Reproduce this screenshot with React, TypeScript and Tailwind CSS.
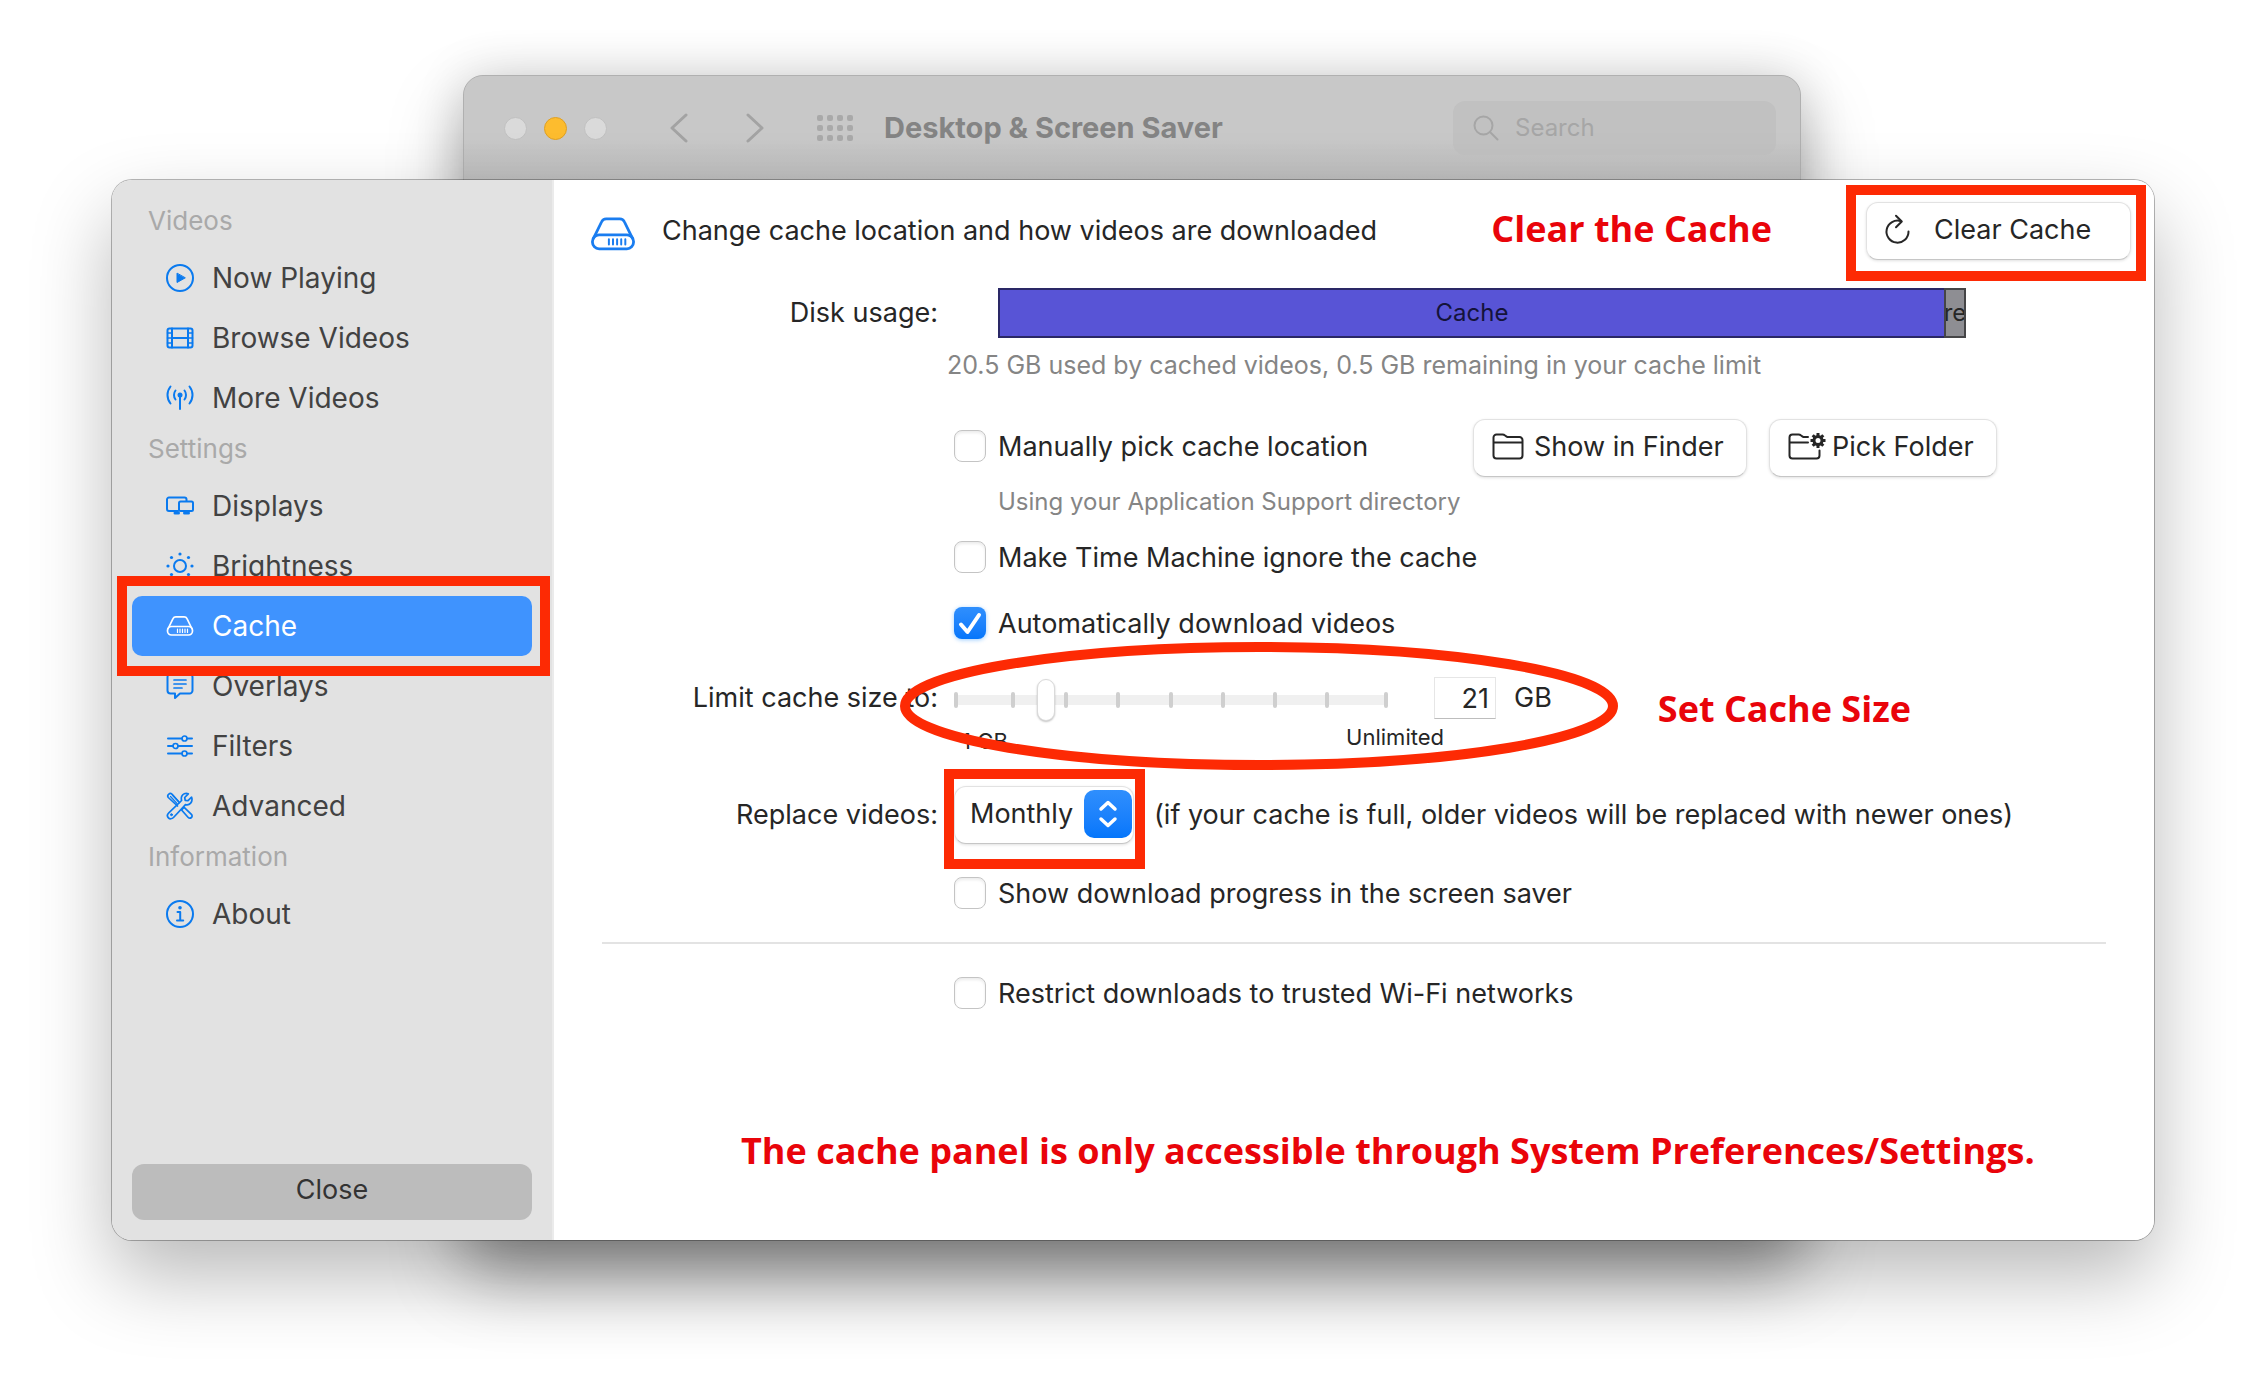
import type { ReactNode } from "react";

function Svg({ size = 28, box = 28, className = "", children }: { size?: number; box?: number; className?: string; children: ReactNode }) {
  return (
    <svg
      width={size}
      height={size}
      viewBox={`0 0 ${box} ${box}`}
      fill="none"
      stroke="currentColor"
      strokeWidth="2"
      strokeLinecap="round"
      strokeLinejoin="round"
      className={`shrink-0 ${className}`}
      aria-hidden="true"
    >
      {children}
    </svg>
  );
}

const PlayIcon = () => (
  <Svg>
    <circle cx="14" cy="14" r="13" />
    <path d="M11 9.500v9l8-4.500z" fill="currentColor" strokeWidth="1" />
  </Svg>
);

const FilmIcon = () => (
  <Svg>
    <rect x="1.500" y="4.500" width="25" height="19" rx="2" />
    <path d="M6 4.500v19M22 4.500v19M6 14h16" />
    <path d="M1.500 9H6M1.500 14H6M1.500 19H6M22 9h4.500M22 14h4.500M22 19h4.500" strokeWidth="1.500" />
  </Svg>
);

const AntennaIcon = () => (
  <Svg>
    <circle cx="14" cy="11" r="2.500" fill="currentColor" stroke="none" />
    <path d="M14 11v14" />
    <path d="M9.500 6.500c-2 2.500-2 6.500 0 9M18.500 6.500c2 2.500 2 6.500 0 9" />
    <path d="M4.500 2.500c-4 5-4 12 0 17M23.500 2.500c4 5 4 12 0 17" />
  </Svg>
);

const DisplaysIcon = () => (
  <Svg>
    <path d="M12 19H3a2 2 0 0 1-2-2V7.500a2 2 0 0 1 2-2h15.500a2 2 0 0 1 2 2V9" />
    <rect x="13" y="9.500" width="14" height="9.500" rx="1.500" />
    <path d="M9 21h3.500M18.500 21h4" strokeWidth="3" />
  </Svg>
);

const SunIcon = () => (
  <Svg>
    <circle cx="14" cy="14" r="6" />
    <g fill="currentColor" stroke="none">
      <circle cx="14" cy="2" r="1.600" />
      <circle cx="14" cy="26" r="1.600" />
      <circle cx="2" cy="14" r="1.600" />
      <circle cx="26" cy="14" r="1.600" />
      <circle cx="5.500" cy="5.500" r="1.600" />
      <circle cx="22.500" cy="5.500" r="1.600" />
      <circle cx="5.500" cy="22.500" r="1.600" />
      <circle cx="22.500" cy="22.500" r="1.600" />
    </g>
  </Svg>
);

const DriveIcon = ({ size = 28 }: { size?: number }) => (
  <Svg size={size}>
    <g strokeWidth="1.700">
      <rect x="1.500" y="14.500" width="25" height="8.500" rx="4" />
      <path d="M2.200 16.500 7 6.700C7.600 5.400 8.400 4.800 9.800 4.800h8.400c1.400 0 2.200.6 2.800 1.900l4.800 9.800" />
      <path d="M11.500 17.200v3.200M14 17.200v3.200M16.500 17.200v3.200M19 17.200v3.200M21.500 17.200v3.200" strokeWidth="1.200" />
    </g>
  </Svg>
);

const BubbleIcon = () => (
  <Svg>
    <path d="M4.500 2h19a3 3 0 0 1 3 3v13.500a3 3 0 0 1-3 3H14l-5 4.500v-4.500H4.500a3 3 0 0 1-3-3V5a3 3 0 0 1 3-3z" />
    <path d="M8 8h12M8 12h12M8 16h8" strokeWidth="1.700" />
  </Svg>
);

const FiltersIcon = () => (
  <Svg>
    <path d="M2 6.500h13.500M21 6.500h5M2 14h5M12 14h14M2 21.500h13.500M21 21.500h5" />
    <g strokeWidth="1.700">
      <circle cx="18.500" cy="6.500" r="2.500" />
      <circle cx="9.500" cy="14" r="2.500" />
      <circle cx="18.500" cy="21.500" r="2.500" />
    </g>
  </Svg>
);

const ToolsIcon = () => (
  <Svg>
    <g strokeWidth="1.700">
      <path d="M11.500 14 2.300 5.500c-.9-1.200-.7-2.300.3-3.200s2.200-1.100 3.300-.2l7.500 8.400" />
      <path d="M4.500 4.500l6.500 7M7 3.500l5.500 6" strokeWidth="1.200" />
      <path d="M15.800 18.200 22 25.200c1 1.100 2.500 1.100 3.400.3s1-2.200 0-3.200l-6.700-6.500c-1.200-.4-2.500.8-2.900 2.400z" />
      <path d="M25.600 5.200 22 8.700l-2.800-.4-.5-2.800 3.600-3.700c-2.900-1-5.600.2-6.600 2.500-.7 1.700-.4 3-.1 4.200L2.800 20.800c-1.600 1.500-1.700 3.600-.4 5s3.600 1.300 5.100-.3l12-12.900c4 1.200 7.700-2.600 6.100-7.400z" />
      <circle cx="5.500" cy="22.700" r="1" fill="currentColor" strokeWidth="1" />
    </g>
  </Svg>
);

const InfoIcon = () => (
  <Svg>
    <circle cx="14" cy="14" r="13" />
    <circle cx="14" cy="7.700" r="1.800" fill="currentColor" stroke="none" />
    <path d="M11.500 12h2.700v8.200M11 20.500h6.200" />
  </Svg>
);

const ReloadIcon = () => (
  <Svg size={32} box={32} className="text-[#262626]">
    <path d="M19 7.200A11 11 0 1 0 26.500 17.500" />
    <path d="M14 1.800l5.800 5.700-5.800 5.700" />
  </Svg>
);

const FolderIcon = () => (
  <Svg size={32} box={32}>
    <path d="M1.500 24.500v-18a3 3 0 0 1 3-3h6c1.200 0 1.800.3 2.600 1l1.200.9c.7.5 1.300.7 2.200.7H27.500a3 3 0 0 1 3 3v15.400a3 3 0 0 1-3 3h-23a3 3 0 0 1-3-3zM1.500 11.500h29" />
  </Svg>
);

const FolderGearIcon = () => (
  <svg width="38" height="32" viewBox="0 0 38 32" fill="none" stroke="currentColor" strokeWidth="2" strokeLinecap="round" strokeLinejoin="round" className="shrink-0" aria-hidden="true">
    <path d="M20 6.100h-3.500c-.9 0-1.500-.2-2.200-.7l-1.200-.9c-.8-.7-1.400-1-2.600-1h-6a3 3 0 0 0-3 3v18a3 3 0 0 0 3 3h24a3 3 0 0 0 3-3V19.500M1.500 11.500H20" />
    <circle cx="30" cy="9.500" r="4" strokeWidth="3" />
    <g strokeWidth="3" strokeLinecap="butt">
      <path d="M30 2v3M30 14v3M22.500 9.500h3M34.500 9.500h3M24.700 4.200l2.200 2.200M33.100 12.600l2.200 2.200M35.300 4.200l-2.200 2.200M26.900 12.600l-2.200 2.200" />
    </g>
  </svg>
);

type Item = { label: string; icon: ReactNode; selected?: boolean };

const sections: { title: string; items: Item[] }[] = [
  {
    title: "Videos",
    items: [
      { label: "Now Playing", icon: <PlayIcon /> },
      { label: "Browse Videos", icon: <FilmIcon /> },
      { label: "More Videos", icon: <AntennaIcon /> },
    ],
  },
  {
    title: "Settings",
    items: [
      { label: "Displays", icon: <DisplaysIcon /> },
      { label: "Brightness", icon: <SunIcon /> },
      { label: "Cache", icon: <DriveIcon />, selected: true },
      { label: "Overlays", icon: <BubbleIcon /> },
      { label: "Filters", icon: <FiltersIcon /> },
      { label: "Advanced", icon: <ToolsIcon /> },
    ],
  },
  { title: "Information", items: [{ label: "About", icon: <InfoIcon /> }] },
];

function SidebarItem({ label, icon, selected }: Item) {
  return (
    <li className="relative">
      <button
        type="button"
        aria-current={selected ? "page" : undefined}
        className={`flex h-[60px] w-full items-center gap-[18px] rounded-[10px] pl-[34px] text-[28px] leading-9 ${
          selected ? "bg-[#3f93fe] text-white" : "text-[#424242]"
        }`}
      >
        <span className={selected ? "text-white" : "text-[#0a7aef]"}>{icon}</span>
        {label}
      </button>
      {selected && <span className="pointer-events-none absolute -inset-y-5 -right-[18px] -left-[15px] z-10 border-10 border-[#fd2a04]" />}
    </li>
  );
}

function Sidebar() {
  return (
    <aside className="flex w-[442px] shrink-0 flex-col rounded-l-[20px] border-r-2 border-[#ebebeb] bg-[#e2e2e2] px-5 py-5">
      <nav>
        {sections.map((s) => (
          <section key={s.title}>
            <h2 className="flex h-12 items-center pb-1.5 pl-4 text-[26px] leading-8 text-[#a9a9a9]">{s.title}</h2>
            <ul>
              {s.items.map((i) => (
                <SidebarItem key={i.label} {...i} />
              ))}
            </ul>
          </section>
        ))}
      </nav>
      <button type="button" className="mt-auto h-14 rounded-xl bg-[#bcbcbc] pb-1 text-[27px] leading-8 text-[#333]">
        Close
      </button>
    </aside>
  );
}

function Check({ id, label, checked = false }: { id: string; label: string; checked?: boolean }) {
  return (
    <div className="flex items-center gap-3">
      <span className="relative flex size-8">
        <input
          id={id}
          type="checkbox"
          defaultChecked={checked}
          className="peer size-8 appearance-none rounded-lg border border-[#c4c4c4] bg-white shadow-[inset_0_2px_3px_rgba(0,0,0,0.08)] checked:border-0 checked:bg-linear-to-b checked:from-[#2f8ffd] checked:to-[#0476fb] checked:shadow-[0_1px_4px_rgba(10,132,255,0.4)]"
        />
        <svg viewBox="0 0 32 32" fill="none" stroke="white" strokeWidth="4" strokeLinecap="round" strokeLinejoin="round" className="pointer-events-none absolute inset-0 hidden size-8 peer-checked:block" aria-hidden="true">
          <path d="M7 17.500l6.500 7.500L25 8" />
        </svg>
      </span>
      <label htmlFor={id} className="pt-0.5">
        {label}
      </label>
    </div>
  );
}

const buttonStyle =
  "flex h-[58px] items-center rounded-xl border border-[#e2e2e2] border-b-[#c6c6c6] bg-white pb-0.5 shadow-[0_1px_3px_rgba(0,0,0,0.12)]";

const row = "grid grid-cols-[384px_1fr] items-center gap-x-4";

function Tick() {
  return <span className="h-4 w-1 rounded-sm bg-[#cfcfcf]" />;
}

function CacheSlider() {
  return (
    <div className="relative mt-1 flex h-[42px] w-[434px] items-center">
      <div className="absolute inset-x-0 h-2.5 rounded-full bg-[#f0f0f0]" />
      <div className="absolute inset-x-0 grid grid-cols-[57fr_53fr_52fr_53fr_52fr_52fr_52fr_59fr_4px]">
        {Array.from({ length: 9 }, (_, i) => (
          <Tick key={i} />
        ))}
      </div>
      <input
        id="limit"
        type="range"
        min={0}
        max={100}
        defaultValue={20}
        className="relative h-[42px] w-full appearance-none bg-transparent [&::-webkit-slider-thumb]:h-[42px] [&::-webkit-slider-thumb]:w-[18px] [&::-webkit-slider-thumb]:appearance-none [&::-webkit-slider-thumb]:rounded-full [&::-webkit-slider-thumb]:border [&::-webkit-slider-thumb]:border-[#dadada] [&::-webkit-slider-thumb]:bg-white [&::-webkit-slider-thumb]:shadow-[0_1px_2px_rgba(0,0,0,0.25)]"
      />
    </div>
  );
}

const note = "font-['Open_Sans',sans-serif] font-bold text-[#e9040a] text-[36px] whitespace-nowrap";

function CachePanel() {
  return (
    <main className="min-w-0 flex-1 rounded-r-[20px] bg-white pb-16 text-[27px] leading-8 text-[#262626]">
      <header className="flex h-[102px] items-center pr-[23px] pl-9">
        <span className="mt-1.5 text-[#1a7df0]">
          <DriveIcon size={46} />
        </span>
        <h1 className="ml-[26px]">Change cache location and how videos are downloaded</h1>
        <p className={`${note} mr-[94px] ml-auto pb-1 leading-10`}>Clear the Cache</p>
        <div className="relative">
          <button type="button" className={`${buttonStyle} w-[265px] gap-5 pl-[15px]`}>
            <ReloadIcon />
            Clear Cache
          </button>
          <span className="pointer-events-none absolute -top-[17px] -right-[15px] -bottom-[21px] -left-5 border-10 border-[#fd2a04]" />
        </div>
      </header>

      <div className={`${row} mt-1.5`}>
        <span className="text-right">Disk usage:</span>
        <div className="mr-[188px] ml-11 flex h-[50px] text-[24px]">
          <div className="flex flex-1 items-center justify-center border-2 border-r-0 border-[#2a2866] bg-[#5854d6]">
            <span className="text-[#14133a]">Cache</span>
          </div>
          <div className="flex w-[22px] items-center justify-center overflow-hidden border-2 border-[#454547] bg-[#8e8e93]">re</div>
        </div>
      </div>
      <p className="flex h-[54px] items-center justify-center text-[25px] text-[#858585]">
        20.5 GB used by cached videos, 0.5 GB remaining in your cache limit
      </p>

      <div className={`${row} mt-[27px]`}>
        <div className="col-start-2 flex items-center">
          <div className="pb-1">
            <Check id="manual" label="Manually pick cache location" />
          </div>
          <div className="mr-[157px] ml-auto flex gap-[22px]">
            <button type="button" className={`${buttonStyle} w-[274px] gap-2.5 pl-[18px]`}>
              <FolderIcon />
              Show in Finder
            </button>
            <button type="button" className={`${buttonStyle} w-[228px] gap-1.5 pl-[18px]`}>
              <FolderGearIcon />
              Pick Folder
            </button>
          </div>
        </div>
      </div>
      <div className={`${row} h-12`}>
        <p className="col-start-2 ml-11 pt-0.5 text-[24px] text-[#858585]">Using your Application Support directory</p>
      </div>
      <div className={`${row} h-16`}>
        <div className="col-start-2">
          <Check id="timemachine" label="Make Time Machine ignore the cache" />
        </div>
      </div>
      <div className={`${row} h-[68px]`}>
        <div className="col-start-2">
          <Check id="auto" label="Automatically download videos" checked />
        </div>
      </div>

      <div className={`${row} mt-[18px]`}>
        <label htmlFor="limit" className="text-right">
          Limit cache size to:
        </label>
        <div className="relative flex h-[46px] items-center">
          <CacheSlider />
          <input
            aria-label="Cache size in GB"
            defaultValue="21"
            className="ml-[46px] h-[42px] w-[62px] border border-[#e6e6e6] border-b-[#bdbdbd] bg-white pr-1.5 text-right"
          />
          <span className="ml-[18px]">GB</span>
          <svg viewBox="0 0 718 128" className="pointer-events-none absolute -top-[33px] -left-[54px] z-10 h-32 w-[718px]" fill="none" aria-hidden="true">
            <ellipse cx="359" cy="64" rx="354" ry="59" stroke="#fd2a04" strokeWidth="10" />
          </svg>
          <p className={`${note} ml-[106px] self-end leading-6`}>Set Cache Size</p>
        </div>
        <div className="col-start-2 flex h-8 w-[490px] justify-between pl-2 text-[22px]">
          <span className="pt-1">1 GB</span>
          <span>Unlimited</span>
        </div>
      </div>

      <div className={`${row} mt-[33px]`}>
        <label htmlFor="replace" className="text-right">
          Replace videos:
        </label>
        <div className="flex items-center gap-5">
          <div className="relative">
            <select
              id="replace"
              defaultValue="Monthly"
              className="block h-[58px] w-[180px] appearance-none rounded-xl border border-[#e2e2e2] border-b-[#c6c6c6] bg-white pb-0.5 pl-[15px] shadow-[0_1px_3px_rgba(0,0,0,0.12)]"
            >
              <option>Monthly</option>
            </select>
            <svg viewBox="0 0 48 48" className="pointer-events-none absolute top-1 right-0.5 size-12 rounded-[10px] bg-linear-to-b from-[#2f8ffd] to-[#0476fb]" fill="none" stroke="white" strokeWidth="3.500" strokeLinecap="round" strokeLinejoin="round" aria-hidden="true">
              <path d="M17 19l7-6.500 7 6.500M17 29l7 6.500 7-6.500" />
            </svg>
            <span className="pointer-events-none absolute -top-[17px] -right-[11px] -bottom-[25px] -left-2.5 border-10 border-[#fd2a04]" />
          </div>
          <span>(if your cache is full, older videos will be replaced with newer ones)</span>
        </div>
      </div>
      <div className={`${row} mt-5 h-[58px]`}>
        <div className="col-start-2">
          <Check id="progress" label="Show download progress in the screen saver" />
        </div>
      </div>
      <hr className="mt-5 mr-12 ml-12 border-t-2 border-[#e3e3e3]" />
      <div className={`${row} mt-5 h-[58px]`}>
        <div className="col-start-2">
          <Check id="wifi" label="Restrict downloads to trusted Wi-Fi networks" />
        </div>
      </div>
      <p className={`${note} mt-[104px] ml-[187px] leading-[50px]`}>
        The cache panel is only accessible through System Preferences/Settings.
      </p>
    </main>
  );
}

function PreferencesWindow() {
  return (
    <div className="absolute -top-[105px] right-[353px] bottom-0 left-[351px] rounded-[20px] border border-[#b0b0b0] bg-[#c7c7c7] shadow-[0_36px_70px_rgba(0,0,0,0.34),0_0_50px_rgba(0,0,0,0.14)]">
      <div className="flex h-[104px] items-center rounded-t-[20px] bg-linear-to-b from-[#c8c8c8] from-60% to-[#bdbdbd] pr-6 pl-10">
        <div className="flex gap-[17px]">
          <span className="size-[23px] rounded-full border border-[#c0c0c0] bg-[#dadada]" />
          <span className="size-[23px] rounded-full border border-[#dfa023] bg-[#fdbc2e]" />
          <span className="size-[23px] rounded-full border border-[#c0c0c0] bg-[#dadada]" />
        </div>
        <button type="button" aria-label="Back" className="ml-[63px] text-[#a3a3a3]">
          <svg width="18" height="30" viewBox="0 0 18 30" fill="none" stroke="currentColor" strokeWidth="3" strokeLinecap="round" strokeLinejoin="round"><path d="M16 2L2 15l14 13" /></svg>
        </button>
        <button type="button" aria-label="Forward" className="ml-[58px] text-[#a3a3a3]">
          <svg width="18" height="30" viewBox="0 0 18 30" fill="none" stroke="currentColor" strokeWidth="3" strokeLinecap="round" strokeLinejoin="round"><path d="M2 2l14 13L2 28" /></svg>
        </button>
        <button type="button" aria-label="Show all" className="ml-[53px] grid grid-cols-4 gap-x-1 gap-y-1">
          {Array.from({ length: 12 }, (_, i) => (
            <span key={i} className="size-1.5 rounded-xs bg-[#a9a9a9]" />
          ))}
        </button>
        <span className="ml-[31px] text-[29px] leading-9 font-bold text-[#848484]">Desktop &amp; Screen Saver</span>
        <label className="ml-auto flex h-[54px] w-[323px] items-center gap-4 rounded-xl bg-[#c1c1c1] pl-5 text-[#a6a6a6]">
          <svg width="26" height="26" viewBox="0 0 26 26" fill="none" stroke="currentColor" strokeWidth="2" strokeLinecap="round" className="shrink-0" aria-hidden="true">
            <circle cx="10.500" cy="10.500" r="9" />
            <path d="M17 17l7.500 7.500" />
          </svg>
          <input aria-label="Search" placeholder="Search" className="w-full min-w-0 bg-transparent text-[24px] leading-8 placeholder:text-[#a6a6a6]" />
        </label>
      </div>
    </div>
  );
}

export default function App() {
  return (
    <div className="min-h-screen overflow-hidden bg-white px-28 pt-[180px] pb-36 font-['Inter',sans-serif]">
      <div className="relative">
        <PreferencesWindow />
        <div className="relative flex rounded-[20px] shadow-[0_0_0_1px_rgba(0,0,0,0.28),0_36px_80px_rgba(0,0,0,0.28)]">
          <Sidebar />
          <CachePanel />
        </div>
      </div>
    </div>
  );
}
